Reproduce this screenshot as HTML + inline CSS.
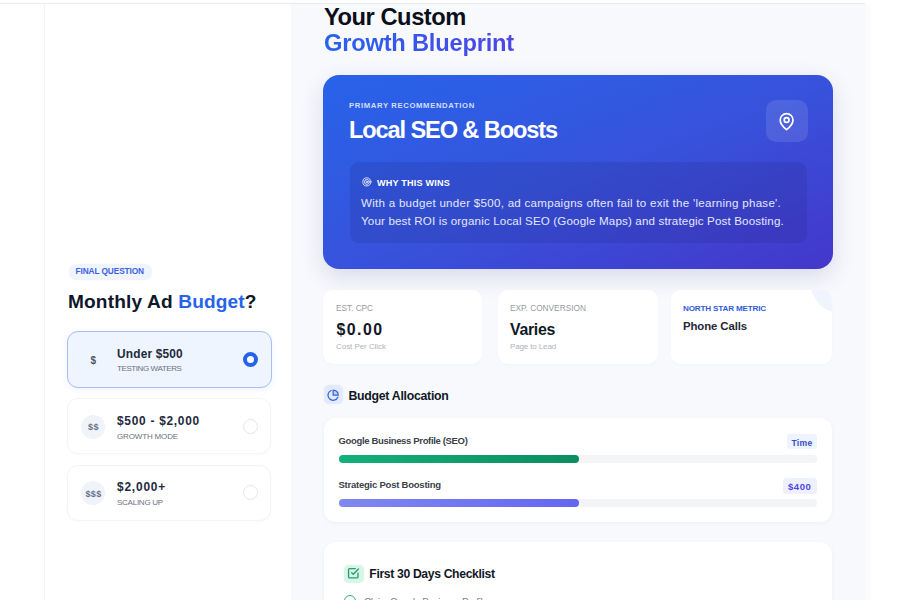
<!DOCTYPE html>
<html><head><meta charset="utf-8"><style>
html,body{margin:0;padding:0;width:900px;height:600px;overflow:hidden;background:#fff}
body{position:relative;font-family:"Liberation Sans",sans-serif}
.t{position:absolute;white-space:nowrap;line-height:1}
.box{position:absolute}
</style></head><body>
<div style="position:absolute;left:0;top:0;width:900px;height:600px;background:#fff"></div>
<div style="position:absolute;left:291px;top:4px;width:574px;height:596px;background:#f8f9fc"></div>
<div style="position:absolute;left:865px;top:4px;width:6px;height:596px;background:#fcfcfe"></div>
<div style="position:absolute;left:44px;top:4px;width:1px;height:596px;background:#f3f4f5"></div>
<div style="position:absolute;left:0;top:3px;width:865px;height:1px;background:#ececee;box-shadow:0 0 1.5px rgba(0,0,0,0.05)"></div>
<div class="box" style="left:69px;top:264px;width:83px;height:16px;border-radius:8px;background:#f0f4fe;box-shadow:0 0 2px #f0f4fe"></div>
<div class="t" style="left:75.50px;top:267.00px;font-size:8.30px;font-weight:700;color:#3a62dc;letter-spacing:-0.10px;">FINAL QUESTION</div>
<div class="t" style="left:68.00px;top:292.00px;font-size:19.10px;font-weight:700;color:#0f172a;letter-spacing:0.15px;">Monthly Ad <span style="color:#2563eb">Budget</span>?</div>
<div class="box" style="left:67px;top:331px;width:205px;height:57px;border-radius:11px;background:#eef5fe;border:1px solid #a9bdf0;box-sizing:border-box;box-shadow:0 2px 6px rgba(37,99,235,0.08)"></div>
<div class="box" style="left:67px;top:398px;width:204px;height:56px;border-radius:11px;background:#fff;border:1px solid #f3f4f7;box-sizing:border-box;box-shadow:0 1px 3px rgba(0,0,0,0.025)"></div>
<div class="box" style="left:67px;top:465px;width:204px;height:56px;border-radius:11px;background:#fff;border:1px solid #f3f4f7;box-sizing:border-box;box-shadow:0 1px 3px rgba(0,0,0,0.025)"></div>
<div class="box" style="left:81px;top:347.5px;width:24px;height:24px;border-radius:50%;background:#eef5fe"></div>
<div class="box" style="left:81px;top:415px;width:24px;height:24px;border-radius:50%;background:#f0f3f8"></div>
<div class="box" style="left:81px;top:481px;width:24px;height:24px;border-radius:50%;background:#f0f3f8"></div>
<div class="t" style="left:90.50px;top:356.00px;font-size:10.00px;font-weight:700;color:#4b5563;letter-spacing:-0.06px;">$</div>
<div class="t" style="left:88.00px;top:423.00px;font-size:9.00px;font-weight:700;color:#64748b;letter-spacing:0.49px;">$$</div>
<div class="t" style="left:85.50px;top:490.00px;font-size:9.00px;font-weight:700;color:#64748b;letter-spacing:0.33px;">$$$</div>
<div class="t" style="left:117.00px;top:349.00px;font-size:11.90px;font-weight:700;color:#1e293b;letter-spacing:0.18px;">Under $500</div>
<div class="t" style="left:117.00px;top:365.00px;font-size:8.00px;font-weight:400;color:#6b7280;letter-spacing:-0.41px;">TESTING WATERS</div>
<div class="t" style="left:117.00px;top:416.00px;font-size:11.90px;font-weight:700;color:#1e293b;letter-spacing:0.73px;">$500 - $2,000</div>
<div class="t" style="left:117.00px;top:433.00px;font-size:8.00px;font-weight:400;color:#6b7280;letter-spacing:-0.15px;">GROWTH MODE</div>
<div class="t" style="left:117.00px;top:482.00px;font-size:11.90px;font-weight:700;color:#1e293b;letter-spacing:0.81px;">$2,000+</div>
<div class="t" style="left:117.00px;top:499.00px;font-size:8.00px;font-weight:400;color:#6b7280;letter-spacing:-0.25px;">SCALING UP</div>
<div class="box" style="left:243px;top:352px;width:15px;height:15px;border-radius:50%;border:4px solid #2563eb;background:#fff;box-sizing:border-box"></div>
<div class="box" style="left:243px;top:418.5px;width:15px;height:15px;border-radius:50%;border:1px solid #e3e6ea;background:#fff;box-sizing:border-box"></div>
<div class="box" style="left:243px;top:485px;width:15px;height:15px;border-radius:50%;border:1px solid #e3e6ea;background:#fff;box-sizing:border-box"></div>
<div class="t" style="left:324.00px;top:6.00px;font-size:23.70px;font-weight:700;color:#0b0f1a;letter-spacing:-0.46px;">Your Custom</div>
<div class="t" style="left:324.00px;top:32.00px;font-size:23.70px;font-weight:700;color:#2f5ae6;letter-spacing:-0.22px;background:linear-gradient(90deg,#2563eb,#4f46e5);-webkit-background-clip:text;background-clip:text;-webkit-text-fill-color:transparent;">Growth Blueprint</div>
<div class="box" style="left:323px;top:75px;width:510px;height:194px;border-radius:16px;background:linear-gradient(to bottom right,#2763ea 0%,#3753dc 50%,#4437ca 100%);box-shadow:0 8px 22px rgba(55,60,150,0.16)"></div>
<div class="t" style="left:349.00px;top:102.00px;font-size:7.70px;font-weight:700;color:#d3defc;letter-spacing:0.64px;">PRIMARY RECOMMENDATION</div>
<div class="t" style="left:349.00px;top:119.00px;font-size:23.60px;font-weight:700;color:#ffffff;letter-spacing:-1.12px;">Local SEO &amp; Boosts</div>
<div class="box" style="left:766px;top:100px;width:42px;height:42px;border-radius:10px;background:rgba(255,255,255,0.11)"></div>
<svg class="box" style="left:777.1px;top:111.7px" width="19.2" height="19.2" viewBox="0 0 24 24" fill="none" stroke="#fff" stroke-width="2.1" stroke-linecap="round" stroke-linejoin="round"><path d="M20 10c0 6-8 12-8 12s-8-6-8-12a8 8 0 0 1 16 0Z"/><circle cx="12" cy="10" r="3"/></svg>
<div class="box" style="left:350px;top:162px;width:457px;height:81px;border-radius:9px;background:rgba(20,20,90,0.13)"></div>
<svg class="box" style="left:361.8px;top:177.1px" width="9.8" height="9.8" viewBox="0 0 24 24" fill="none" stroke="#e6ebff" stroke-width="2.2" stroke-linecap="round" stroke-linejoin="round"><circle cx="12" cy="12" r="10"/><circle cx="12" cy="12" r="6"/><circle cx="12" cy="12" r="2"/></svg>
<div class="t" style="left:377.00px;top:179.00px;font-size:9.10px;font-weight:700;color:#ffffff;letter-spacing:0.18px;">WHY THIS WINS</div>
<div class="t" style="left:361.00px;top:197.00px;font-size:11.60px;font-weight:400;color:#e3e8fc;letter-spacing:0.26px;">With a budget under $500, ad campaigns often fail to exit the 'learning phase'.</div>
<div class="t" style="left:361.00px;top:215.00px;font-size:11.60px;font-weight:400;color:#e3e8fc;letter-spacing:0.15px;">Your best ROI is organic Local SEO (Google Maps) and strategic Post Boosting.</div>
<div class="box" style="left:323px;top:289.5px;width:159px;height:74px;border-radius:10px;background:#fff;box-shadow:0 1px 3px rgba(15,23,42,0.025);overflow:hidden"></div>
<div class="box" style="left:498px;top:289.5px;width:160px;height:74px;border-radius:10px;background:#fff;box-shadow:0 1px 3px rgba(15,23,42,0.025);overflow:hidden"></div>
<div class="box" style="left:671px;top:289.5px;width:161px;height:74px;border-radius:10px;background:#fff;box-shadow:0 1px 3px rgba(15,23,42,0.025);overflow:hidden"></div>
<div class="box" style="left:671px;top:289.5px;width:161px;height:74px;border-radius:10px;overflow:hidden"><div style="position:absolute;left:140px;top:-35px;width:58px;height:58px;border-radius:50%;background:#f0f5fd"></div></div>
<div class="t" style="left:336.00px;top:304.00px;font-size:8.30px;font-weight:400;color:#959aa3;letter-spacing:-0.04px;">EST. CPC</div>
<div class="t" style="left:336.50px;top:322.00px;font-size:15.90px;font-weight:700;color:#111827;letter-spacing:1.44px;">$0.00</div>
<div class="t" style="left:336.00px;top:343.00px;font-size:8.00px;font-weight:400;color:#afb4bc;letter-spacing:-0.05px;">Cost Per Click</div>
<div class="t" style="left:510.00px;top:304.00px;font-size:8.30px;font-weight:400;color:#959aa3;letter-spacing:0.00px;">EXP. CONVERSION</div>
<div class="t" style="left:510.00px;top:322.00px;font-size:15.90px;font-weight:700;color:#111827;letter-spacing:-0.31px;">Varies</div>
<div class="t" style="left:510.00px;top:343.00px;font-size:8.00px;font-weight:400;color:#afb4bc;letter-spacing:-0.13px;">Page to Lead</div>
<div class="t" style="left:683.00px;top:305.00px;font-size:8.10px;font-weight:700;color:#2f5bd8;letter-spacing:-0.16px;">NORTH STAR METRIC</div>
<div class="t" style="left:683.00px;top:321.00px;font-size:11.40px;font-weight:700;color:#1f2937;letter-spacing:-0.11px;">Phone Calls</div>
<div class="box" style="left:324px;top:385px;width:18.5px;height:18.5px;border-radius:5px;background:#e2eafc;box-shadow:0 0 1.5px #e2eafc"></div>
<svg class="box" style="left:326.5px;top:388.8px" width="12.3" height="12.3" viewBox="0 0 24 24" fill="none" stroke="#3563dc" stroke-width="2.4" stroke-linecap="round" stroke-linejoin="round"><path d="M21.21 15.89A10 10 0 1 1 8 2.83"/><path d="M22 12A10 10 0 0 0 12 2v10z" fill="rgba(53,99,220,0.18)"/></svg>
<div class="t" style="left:348.50px;top:390.00px;font-size:12.30px;font-weight:700;color:#111827;letter-spacing:-0.28px;">Budget Allocation</div>
<div class="box" style="left:324px;top:417.5px;width:507.5px;height:104px;border-radius:12px;background:#fff;box-shadow:0 1px 5px rgba(15,23,42,0.045)"></div>
<div class="t" style="left:338.50px;top:436.00px;font-size:9.50px;font-weight:700;color:#3a3f4b;letter-spacing:-0.34px;">Google Business Profile (SEO)</div>
<div class="box" style="left:786.5px;top:434.3px;width:30.5px;height:15px;border-radius:3px;background:#eef4fe"></div>
<div class="t" style="left:791.50px;top:439.00px;font-size:8.60px;font-weight:700;color:#3b4fc4;letter-spacing:0.27px;">Time</div>
<div class="box" style="left:338.5px;top:455px;width:478.5px;height:7.5px;border-radius:4px;background:#f2f4f6"></div>
<div class="box" style="left:338.5px;top:455px;width:240px;height:7.5px;border-radius:4px;background:linear-gradient(90deg,#12b07a,#0b8d5f)"></div>
<div class="t" style="left:338.50px;top:480.00px;font-size:9.50px;font-weight:700;color:#3a3f4b;letter-spacing:-0.23px;">Strategic Post Boosting</div>
<div class="box" style="left:782.5px;top:478.3px;width:34.5px;height:15.7px;border-radius:3px;background:#eef0fd"></div>
<div class="t" style="left:788.00px;top:482.00px;font-size:9.50px;font-weight:700;color:#4f46e5;letter-spacing:0.59px;">$400</div>
<div class="box" style="left:338.5px;top:499px;width:478.5px;height:7.5px;border-radius:4px;background:#f2f4f6"></div>
<div class="box" style="left:338.5px;top:499px;width:240px;height:7.5px;border-radius:4px;background:linear-gradient(90deg,#8088f0,#6366f1)"></div>
<div class="box" style="left:324px;top:542px;width:507.5px;height:80px;border-radius:12px;background:#fff;box-shadow:0 1px 5px rgba(15,23,42,0.045)"></div>
<div class="box" style="left:344px;top:564.7px;width:19.5px;height:18.8px;border-radius:5px;background:#d8f6e8;box-shadow:0 0 1.5px #d8f6e8"></div>
<svg class="box" style="left:347.2px;top:567.2px" width="12.5" height="12.5" viewBox="0 0 24 24" fill="none" stroke="#2a9d72" stroke-width="2.6" stroke-linecap="round" stroke-linejoin="round"><polyline points="9 11 12 14 22 4"/><path d="M21 12v7a2 2 0 0 1-2 2H5a2 2 0 0 1-2-2V5a2 2 0 0 1 2-2h11"/></svg>
<div class="t" style="left:369.30px;top:568.00px;font-size:12.20px;font-weight:700;color:#111827;letter-spacing:-0.35px;">First 30 Days Checklist</div>
<div class="box" style="left:343.5px;top:594.5px;width:12px;height:12px;border-radius:50%;border:1.3px solid #2fae80;box-sizing:border-box"></div>
<div class="t" style="left:364.00px;top:598.00px;font-size:10.00px;font-weight:400;color:#7b8190;letter-spacing:-0.40px;">Claim Google Business Profile</div>
</body></html>
